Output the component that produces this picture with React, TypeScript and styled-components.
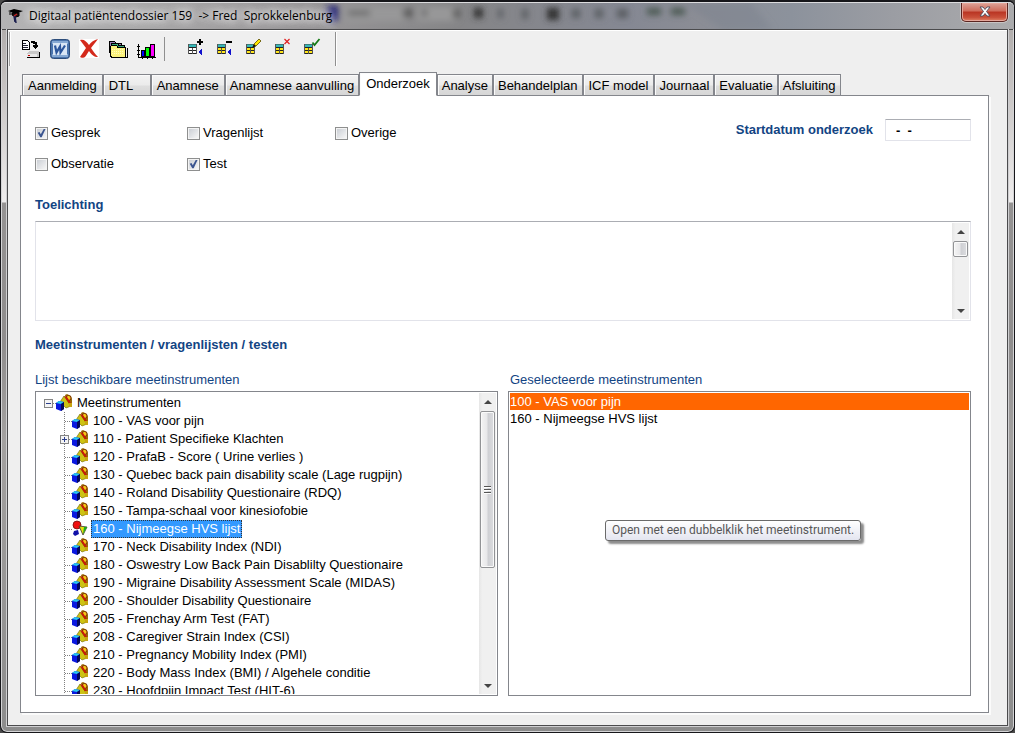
import React from 'react';
import styled, { createGlobalStyle, css } from 'styled-components';

const ui = '"Liberation Sans", Arial, sans-serif';
const chrome = '"Open Sans", "Noto Sans", sans-serif';
const hint = 'Roboto, "Open Sans", sans-serif';
const line = '#84868c';
const heading = '#124483';

const GlobalStyle = createGlobalStyle`
  *, *::before, *::after { box-sizing: border-box; }
  body {
    margin: 0;
    background: #4a4a4a;
    font: 13px/18px ${ui};
    color: #000;
  }
  button, input, textarea { font: inherit; color: inherit; }
  ul { list-style: none; margin: 0; padding: 0; }
`;

const Window = styled.div`
  min-height: 100vh;
  display: flex;
  flex-direction: column;
  padding: 0 6px 6px;
  border: 1px solid #16161a;
  border-top-width: 2px;
  border-radius: 7px;
  box-shadow: inset 0 0 0 1px #d4d4d6;
  background:
    linear-gradient(180deg, rgba(0, 0, 0, 0) 0 28px, #b2aead 28px, #efeded 200px, #959393 201px, #8f8d8d 340px, #a3a1a0 60%, #8c8c8c 100%) padding-box;
`;

const TitleBar = styled.header`
  position: relative;
  display: flex;
  align-items: center;
  height: 27px;
  margin: 0 -6px;
  padding: 0 6px 0 7px;
  border-radius: 5px 5px 0 0;
  border-top: 1px solid #dcdcde;
  overflow: hidden;
  background: linear-gradient(90deg, #b4b4b5 0, #a9a8a9 14%, #999799 30%, #858587 45%, #858893 62%, #8b8d95 69%, #8c929c 78%, #9b9da3 88%, #ababad 100%);
`;

const Backdrop = styled.svg`
  position: absolute;
  inset: 0;
  width: 100%;
  height: 100%;
`;

const Title = styled.h1`
  position: relative;
  margin: 0 0 0 5px;
  font: 12px/18px ${chrome};
  white-space: pre;
  text-shadow: 0 0 8px #fff, 0 0 8px #eee, 0 0 12px #ddd;
`;

const TitleIcon = styled.svg`
  position: relative;
  flex: none;
`;

const CloseButton = styled.button`
  position: relative;
  align-self: flex-start;
  display: flex;
  align-items: center;
  justify-content: center;
  width: 47px;
  height: 19px;
  margin-left: auto;
  padding: 0 0 2px;
  border: 1px solid #5a2420;
  border-top: 0;
  border-radius: 0 0 5px 5px;
  box-shadow: inset 0 0 0 1px #e5a69a, 0 0 0 1px #c9c4c4;
  background: linear-gradient(180deg, #dda297 0, #cf6a59 45%, #b93422 50%, #c9503a 80%, #e08366 100%);
`;

const Client = styled.main`
  flex: 1;
  display: flex;
  flex-direction: column;
  border: 1px solid #4b4b4d;
  background: #efefef;
  box-shadow: inset 0 1px 0 #fff, 0 0 0 1px #cfcfd1;
`;

const Toolbar = styled.div`
  display: flex;
  align-items: center;
  align-self: flex-start;
  width: 327px;
  height: 34px;
  margin: 2px 0 0 1px;
  border-left: 1px solid #a0a0a0;
  border-right: 1px solid #8f8f8f;
  box-shadow: inset 1px 0 0 #fff, 1px 0 0 #fff;
`;

const ToolGroup = styled.div<{ $small?: boolean }>`
  display: flex;
  align-items: center;
  gap: ${p => (p.$small ? '13px' : '9px')};
  padding: ${p => (p.$small ? '0 0 4px 22px' : '0 7px 0 11px')};
`;

const ToolButton = styled.button<{ $small?: boolean }>`
  display: block;
  width: ${p => (p.$small ? '16px' : '20px')};
  height: ${p => (p.$small ? '16px' : '20px')};
  padding: 0;
  border: 0;
  background: none;
  svg { display: block; }
`;

const Divider = styled.span`
  width: 1px;
  height: 24px;
  background: #8f8f8f;
`;

const Tabs = styled.div`
  display: flex;
  align-items: flex-end;
  height: 24px;
  margin: 6px 18px 0 14px;
  z-index: 1;
`;

const Tab = styled.button<{ $active?: boolean; $roomy?: boolean }>`
  flex: none;
  height: 22px;
  padding: 1px ${p => (p.$roomy ? '5px' : '4px')} 0;
  border: 1px solid ${line};
  box-shadow: inset 1px 1px 0 #fbfbfb;
  background: linear-gradient(180deg, #f3f3f3 0, #ebebeb 50%, #dedede 55%, #d6d6d6 100%);
  line-height: 18px;
  text-align: left;
  white-space: nowrap;
  min-width: 48px;
  ${p => p.$active && css`
    height: 24px;
    padding: 0 6px;
    border-bottom-color: #fff;
    background: #fff;
  `}
`;

const Panel = styled.section`
  flex: 1;
  margin: -1px 18px 12px 12px;
  padding: 23px 17px 16px 14px;
  border: 1px solid ${line};
  background: #fff;
  box-shadow: 2px 2px 0 #fbfbfb;
`;

const TopRow = styled.div`
  display: flex;
  align-items: flex-start;
  justify-content: space-between;
`;

const Checks = styled.div`
  display: grid;
  grid-template-columns: 152px 148px auto;
  row-gap: 13px;
  padding-top: 5px;
`;

const Check = styled.label`
  display: flex;
  align-items: center;
  gap: 3px;
`;

const CheckBox = styled.input`
  appearance: none;
  flex: none;
  position: relative;
  width: 13px;
  height: 13px;
  margin: 0;
  border: 1px solid #8e8f8f;
  background: linear-gradient(135deg, #cbcfd5, #f6f6f6) content-box, #f4f4f4;
  padding: 1px;
  &:checked::before {
    content: '';
    position: absolute;
    inset: 1px;
    background: #3b5590;
    clip-path: polygon(8% 48%, 28% 40%, 42% 64%, 76% 4%, 96% 4%, 52% 96%, 36% 96%);
  }
`;

const DateField = styled.label`
  display: flex;
  align-items: center;
  gap: 12px;
  color: ${heading};
  font-weight: bold;
`;

const Field = css`
  border: 1px solid #e2e3ea;
  border-top-color: #abadb3;
  background: #fff;
`;

const DateInput = styled.input`
  ${Field}
  width: 86px;
  height: 22px;
  padding: 0 10px;
  border-radius: 1px;
  color: #000;
  white-space: pre;
`;

const Heading = styled.h2<{ $first?: boolean }>`
  margin: ${p => (p.$first ? '23px 0 7px' : '15px 0 17px')};
  font: bold 13px/18px ${ui};
  color: ${heading};
`;

const MemoBox = styled.div`
  ${Field}
  display: flex;
  height: 100px;
  padding: 1px;
`;

const Memo = styled.textarea`
  flex: 1;
  min-width: 0;
  padding: 2px;
  border: 0;
  outline: 0;
  resize: none;
  overflow: hidden;
`;

const Bar = styled.div`
  flex: none;
  display: flex;
  flex-direction: column;
  width: 17px;
  background: linear-gradient(90deg, #e6e6e6, #f0f0f0 20%, #f0f0f0);
`;

const Arrow = styled.button`
  display: flex;
  align-items: center;
  justify-content: center;
  height: 17px;
  padding: 0;
  border: 0;
  background: none;
`;

const Track = styled.div`
  flex: 1;
  padding: 1px;
`;

const Thumb = styled.div<{ $size: string }>`
  display: flex;
  align-items: center;
  justify-content: center;
  height: ${p => p.$size};
  border: 1px solid #929396;
  border-radius: 2px;
  box-shadow: inset 0 0 0 1px #fafafa;
  background: linear-gradient(90deg, #f4f4f4 0, #e8e8ea 45%, #cfd0d4 55%, #dcdde0 100%);
`;

const Columns = styled.div`
  display: flex;
  gap: 10px;
`;

const Column = styled.div`
  flex: 1;
  min-width: 0;
`;

const ListLabel = styled.h3<{ $inset?: boolean }>`
  margin: 0 0 2px;
  padding-left: ${p => (p.$inset ? '2px' : '0')};
  font: 13px/18px ${ui};
  color: ${heading};
`;

const ListBox = styled.div`
  position: relative;
  display: flex;
  height: 305px;
  padding: 1px;
  border: 1px solid ${line};
  background: #fff;
`;

const Tree = styled.ul`
  flex: 1;
  min-width: 0;
  overflow: hidden;
  padding: 1px 0 0 3px;
`;

const TreeRow = styled.li<{ $child?: boolean }>`
  display: flex;
  height: 18px;
  padding-left: ${p => (p.$child ? '16px' : '0')};
  white-space: nowrap;
  svg { flex: none; display: block; }
`;

const TreeText = styled.span<{ $selected?: boolean }>`
  margin-left: 3px;
  padding: 0 2px;
  ${p => p.$selected && css`
    background: #3399ff;
    color: #fff;
    outline: 1px dotted #333;
    outline-offset: -1px;
  `}
`;

const Picks = styled.ul`
  flex: 1;
`;

const Pick = styled.li<{ $selected?: boolean }>`
  height: 17px;
  line-height: 17px;
  ${p => p.$selected && css`
    background: #ff6600;
    color: #fff;
  `}
`;

const Tooltip = styled.div`
  position: absolute;
  top: 128px;
  left: 96px;
  padding: 0 6px 1px;
  border: 1px solid #6a6a6a;
  border-radius: 3px;
  background: linear-gradient(180deg, #fff, #e4e5f0);
  box-shadow: 3px 3px 2px rgba(0, 0, 0, 0.45);
  color: #575757;
  font: 12px/18px ${hint};
  white-space: nowrap;
`;

const DocumentIcon = () => (
  <svg width="20" height="20" shapeRendering="crispEdges">
    <path d="M1 1h5l2 2v7H1z" fill="#fff" stroke="#000" />
    <path d="M2 4h3M2 6h5M2 8h5" stroke="#223" />
    <path d="M10 3h3v1h2v5M12 7h5M13 8h3M14 9h1" stroke="#000" strokeWidth="1.6" fill="none" />
    <path d="M6 14l2-2h10v5l-1 2H6z" fill="#c8c8c8" />
    <path d="M6 15h10v3H6z" fill="#e8e8e8" />
    <path d="M6 18.500h12V13" stroke="#000" fill="none" />
    <path d="M7 16.500h2" stroke="#c00" />
  </svg>
);

const WordIcon = () => (
  <svg width="20" height="20">
    <rect x="0.500" y="0.500" width="19" height="19" rx="3" fill="#4a74ad" stroke="#2d4d7a" />
    <path d="M2 2h16v3H2zM2 15h16v3H2z" fill="#86a9d3" />
    <rect x="3" y="4" width="14" height="12" fill="#d9e6f5" />
    <path d="M5 6.500l1.500 7 3.500-6 0.500 6 4.500-7" stroke="#2a559b" strokeWidth="2.200" fill="none" />
  </svg>
);

const DeleteIcon = () => (
  <svg width="20" height="20">
    <rect width="20" height="19" fill="#fff" />
    <path d="M1 1c4-1 6 1 9 5 2-3 5-5 9-6-3 4-5 6-7 9 2 3 4 6 7 9-4 0-6-2-9-6-2 3-3 5-4 6-1 1-4 1-5 0 2-3 4-6 6-9C5 6 3 4 1 1z" fill="#d42a1c" />
  </svg>
);

const FoldersIcon = () => (
  <svg width="20" height="20" shapeRendering="crispEdges">
    <path d="M1.500 14V3l1-1h4l1 2h6v3" fill="#9b7fb5" stroke="#000" />
    <path d="M3.500 16V5l1-1h5l1 2h6v4" fill="#39a878" stroke="#000" />
    <path d="M2.500 17V8l1-2h5l1 2h8v10H3.500z" fill="#fbf27c" stroke="#000" />
    <path d="M4 18.500h15V9" stroke="#000" fill="none" />
    <path d="M4 10h12M4 12h12M4 14h12" stroke="#fffbc0" strokeDasharray="1 1" />
  </svg>
);

const ChartIcon = () => (
  <svg width="20" height="20" shapeRendering="crispEdges">
    <path d="M1.500 5v13h17M0 7.500h3M0 11.500h3M0 15.500h3M5.500 17v3M10.500 17v3M15.500 17v3" stroke="#000" fill="none" />
    <path d="M4.500 17.500v-6h3v6z" fill="#00f" stroke="#000" />
    <path d="M8.500 17.500v-9h4v9z" fill="#0f0" stroke="#000" />
    <path d="M13.500 17.500v-12h4v12z" fill="#f0f" stroke="#000" />
  </svg>
);

type Mark = 'plus' | 'minus' | 'pencil' | 'cross' | 'tick';

const TableIcon = ({ mark }: { mark: Mark }) => (
  <svg width="16" height="16" overflow="visible" shapeRendering="crispEdges">
    <rect x="1" y="5" width="9" height="10" fill="#fff" />
    <path d="M1 5h9v3H1z" fill="#36b7b7" />
    {mark !== 'plus' && <path d="M1 9h9v5H1z" fill="#ffe51a" />}
    <path d="M1 8.500h9M1 11.500h9M1 14.500h9" stroke="#222" />
    <path d="M1 5.500h9" stroke="#3a7d7d" />
    <path d="M1.500 5v10M5.500 9v6M9.500 5v10" stroke="#555" />
    {mark === 'plus' && <path d="M10 3h6M13 0v6" stroke="#000" strokeWidth="2" />}
    {mark === 'minus' && <path d="M10 3h6" stroke="#000" strokeWidth="2" />}
    {(mark === 'plus' || mark === 'minus') && <path d="M15 10v6l-4-3z" fill="#11c" />}
    {mark === 'pencil' && (
      <g shapeRendering="auto">
        <path d="M8 8l1-3 5-5 2 2-5 5z" fill="#ffe600" stroke="#554a00" strokeWidth="0.8" />
        <path d="M7 9l2-4 2 2z" fill="#111" />
      </g>
    )}
    {mark === 'cross' && <path d="M10.500 0l5 5M15.500 0l-5 5" stroke="#e02020" strokeWidth="1.200" shapeRendering="auto" />}
    {mark === 'tick' && <path d="M9.500 3.500l2 2.500 5-6" stroke="#157a15" strokeWidth="1.800" fill="none" shapeRendering="auto" />}
  </svg>
);

const ShapesIcon = ({ open }: { open?: boolean }) =>
  open ? (
    <svg width="16" height="18">
      <path d="M2 11l4-1 1 4-4 2-2-2z" fill="#1010a8" />
      <circle cx="5" cy="5" r="4" fill="#f01010" stroke="#701010" strokeWidth="0.800" />
      <path d="M7 6l8 1-4 8z" fill="#e8e010" stroke="#333" strokeWidth="0.800" />
      <path d="M11 14l4-7-3 0z" fill="#18b018" />
    </svg>
  ) : (
    <svg width="16" height="18">
      <path d="M9 1l2-1 4 2 1 3v7l-5-1z" fill="#9a6a08" />
      <circle cx="12.500" cy="4" r="2.500" fill="#f5c818" stroke="#6b1a00" strokeWidth="0.800" />
      <path d="M4 8l4-6 7 10-5 2z" fill="#cdc214" stroke="#6a6200" strokeWidth="0.600" />
      <path d="M8 2l6 9 1-2-4-6z" fill="#c81808" />
      <path d="M13 9h3v4h-3z" fill="#c7a510" />
      <path d="M0 9l3-2 5 1v7l-3 2-5-2z" fill="#0a18e0" />
      <path d="M0 9l3-2 5 1-3 2z" fill="#28c8f0" />
      <path d="M5 10l3-2v7l-3 2z" fill="#05085a" />
    </svg>
  );

const Branch = ({ sign, root }: { sign?: '+' | '-'; root?: boolean }) => (
  <svg width="16" height="18" shapeRendering="crispEdges">
    {!root && <path d="M8.500 0v18" stroke="#808080" strokeDasharray="1 1" />}
    <path d="M9 9.500h7" stroke="#808080" strokeDasharray="1 1" />
    {sign && (
      <g>
        <rect x="4.500" y="5.500" width="8" height="8" fill="#f4f4f4" stroke="#848484" />
        <path d={sign === '+' ? 'M6 9.500h5M8.500 7v5' : 'M6 9.500h5'} stroke="#2b3f8c" />
      </g>
    )}
  </svg>
);

const Scrollbar = ({ size, grip }: { size: string; grip?: boolean }) => (
  <Bar>
    <Arrow type="button" aria-label="Omhoog">
      <svg width="8" height="4"><path d="M0 4l4-4 4 4z" fill="#444" /></svg>
    </Arrow>
    <Track>
      <Thumb $size={size}>
        {grip && (
          <svg width="7" height="9" shapeRendering="crispEdges">
            <path d="M0 1.500h7M0 4.500h7M0 7.500h7" stroke="#555" />
            <path d="M0 2.500h7M0 5.500h7M0 8.500h7" stroke="#fff" />
          </svg>
        )}
      </Thumb>
    </Track>
    <Arrow type="button" aria-label="Omlaag">
      <svg width="8" height="4"><path d="M0 0l4 4 4-4z" fill="#444" /></svg>
    </Arrow>
  </Bar>
);

const tools = [
  { label: 'Document', Icon: DocumentIcon },
  { label: 'Word', Icon: WordIcon },
  { label: 'Verwijderen', Icon: DeleteIcon },
  { label: 'Mappen', Icon: FoldersIcon },
  { label: 'Grafiek', Icon: ChartIcon },
];

const rowTools: { label: string; mark: Mark }[] = [
  { label: 'Regel toevoegen', mark: 'plus' },
  { label: 'Regel verwijderen', mark: 'minus' },
  { label: 'Regel wijzigen', mark: 'pencil' },
  { label: 'Annuleren', mark: 'cross' },
  { label: 'Opslaan', mark: 'tick' },
];

const tabs = [
  { name: 'Aanmelding', roomy: true },
  { name: 'DTL', roomy: true },
  { name: 'Anamnese', roomy: true },
  { name: 'Anamnese aanvulling' },
  { name: 'Onderzoek', active: true },
  { name: 'Analyse' },
  { name: 'Behandelplan' },
  { name: 'ICF model', roomy: true },
  { name: 'Journaal' },
  { name: 'Evaluatie' },
  { name: 'Afsluiting' },
];

const checks = [
  { label: 'Gesprek', on: true },
  { label: 'Vragenlijst', on: false },
  { label: 'Overige', on: false },
  { label: 'Observatie', on: false },
  { label: 'Test', on: true },
];

const instruments = [
  '100 - VAS voor pijn',
  '110 - Patient Specifieke Klachten',
  '120 - PrafaB - Score ( Urine verlies )',
  '130 - Quebec back pain disability scale (Lage rugpijn)',
  '140 - Roland Disability Questionaire (RDQ)',
  '150 - Tampa-schaal voor kinesiofobie',
  '160 - Nijmeegse HVS lijst',
  '170 - Neck Disability Index (NDI)',
  '180 - Oswestry Low Back Pain Disablilty Questionaire',
  '190 - Migraine Disability Assessment Scale (MIDAS)',
  '200 - Shoulder Disability Questionaire',
  '205 - Frenchay Arm Test (FAT)',
  '208 - Caregiver Strain Index (CSI)',
  '210 - Pregnancy Mobility Index (PMI)',
  '220 - Body Mass Index (BMI) / Algehele conditie',
  '230 - Hoofdpijn Impact Test (HIT-6)',
];

export default function App() {
  return (
    <>
      <GlobalStyle />
      <Window>
        <TitleBar>
          <Backdrop aria-hidden="true">
            <defs>
              <filter id="soft" x="-20%" y="-50%" width="140%" height="200%">
                <feGaussianBlur stdDeviation="3" />
              </filter>
            </defs>
            <g filter="url(#soft)">
              <path d="M326 3h12v15h-12z" fill="#1c1c70" />
              <path d="M342 4h62v14h-62zM416 4h40v14h-40z" fill="#989899" />
              <path d="M347 8h22v4h-22zM402 6h10v8h-10zM421 7h5v6h-5zM452 6h7v9h-7z" fill="#5c5c5c" />
              <path d="M473 5h9v10h-9zM546 5h12v12h-12z" fill="#333" />
              <path d="M497 6h5v9h-5zM521 6h6v10h-6zM571 6h8v9h-8zM594 6h8v9h-8zM616 6h11v9h-11z" fill="#5a5d62" />
              <path d="M646 5h14v7h-14zM670 5h14v7h-14z" fill="#4c5a52" />
              <path d="M750 0l22 27h-50l-40-27z" fill="#7d838f" opacity="0.500" />
            </g>
          </Backdrop>
          <TitleIcon width="16" height="16">
            <path d="M0 3l6-2 9 2-7 3z" fill="#000" />
            <path d="M4 5h7v3l-3 1-4-2zM2 4v3" fill="#1a1010" stroke="#000" />
            <path d="M7 8l1 7M6 8l1 6" stroke="#1c2050" strokeWidth="1.500" />
            <path d="M6 8l3-2" stroke="#c02020" strokeWidth="1.500" />
          </TitleIcon>
          <Title>{'Digitaal patiëntendossier 159  -> Fred  Sprokkelenburg'}</Title>
          <CloseButton type="button" aria-label="Sluiten">
            <svg width="12" height="11">
              <path d="M1 1h3l2 2.500 2-2.500h3L7.500 5.500 11 10H8L6 7.500 4 10H1l3.500-4.500z" fill="#fff" stroke="#4a4a5a" strokeWidth="0.900" />
            </svg>
          </CloseButton>
        </TitleBar>

        <Client>
          <Toolbar role="toolbar">
            <ToolGroup>
              {tools.map(({ label, Icon }) => (
                <ToolButton key={label} type="button" aria-label={label}><Icon /></ToolButton>
              ))}
            </ToolGroup>
            <Divider />
            <ToolGroup $small>
              {rowTools.map(({ label, mark }) => (
                <ToolButton key={label} type="button" aria-label={label} $small><TableIcon mark={mark} /></ToolButton>
              ))}
            </ToolGroup>
          </Toolbar>

          <Tabs role="tablist">
            {tabs.map(({ name, roomy, active }) => (
              <Tab key={name} type="button" role="tab" aria-selected={!!active} $active={active} $roomy={roomy}>
                {name}
              </Tab>
            ))}
          </Tabs>

          <Panel role="tabpanel">
            <TopRow>
              <Checks>
                {checks.map(({ label, on }) => (
                  <Check key={label}>
                    <CheckBox type="checkbox" defaultChecked={on} />
                    {label}
                  </Check>
                ))}
              </Checks>
              <DateField>
                Startdatum onderzoek
                <DateInput type="text" defaultValue="-  -" />
              </DateField>
            </TopRow>

            <Heading $first id="memo-title">Toelichting</Heading>
            <MemoBox>
              <Memo aria-labelledby="memo-title" />
              <Scrollbar size="16px" />
            </MemoBox>

            <Heading>Meetinstrumenten / vragenlijsten / testen</Heading>

            <Columns>
              <Column>
                <ListLabel>Lijst beschikbare meetinstrumenten</ListLabel>
                <ListBox>
                  <Tree>
                    <TreeRow>
                      <Branch sign="-" root />
                      <ShapesIcon />
                      <TreeText>Meetinstrumenten</TreeText>
                    </TreeRow>
                    {instruments.map(name => {
                      const selected = name.startsWith('160');
                      return (
                        <TreeRow key={name} $child>
                          <Branch sign={name.startsWith('110') ? '+' : undefined} />
                          <ShapesIcon open={selected} />
                          <TreeText $selected={selected}>{name}</TreeText>
                        </TreeRow>
                      );
                    })}
                  </Tree>
                  <Scrollbar size="157px" grip />
                </ListBox>
              </Column>
              <Column>
                <ListLabel $inset>Geselecteerde meetinstrumenten</ListLabel>
                <ListBox>
                  <Picks>
                    <Pick $selected>100 - VAS voor pijn</Pick>
                    <Pick>160 - Nijmeegse HVS lijst</Pick>
                  </Picks>
                  <Tooltip role="tooltip">Open met een dubbelklik het meetinstrument.</Tooltip>
                </ListBox>
              </Column>
            </Columns>
          </Panel>
        </Client>
      </Window>
    </>
  );
}
